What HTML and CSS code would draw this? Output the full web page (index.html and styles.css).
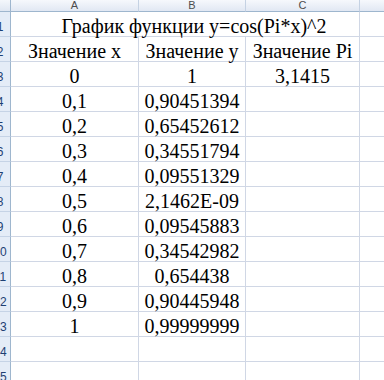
FILE: index.html
```html
<!DOCTYPE html>
<html>
<head>
<meta charset="utf-8">
<link rel="stylesheet" href="styles.css">
</head>
<body>
<div class="sheet">
  <div class="corner"></div><div class="ch">A</div><div class="ch">B</div><div class="ch">C</div><div class="ch last"></div>

  <div class="rh">1</div><div class="c title">График функции y=cos(Pi*x)^2</div><div class="c"></div>
  <div class="rh">2</div><div class="c">Значение x</div><div class="c">Значение y</div><div class="c">Значение Pi</div><div class="c"></div>
  <div class="rh">3</div><div class="c">0</div><div class="c">1</div><div class="c">3,1415</div><div class="c"></div>
  <div class="rh">4</div><div class="c">0,1</div><div class="c">0,90451394</div><div class="c"></div><div class="c"></div>
  <div class="rh">5</div><div class="c">0,2</div><div class="c">0,65452612</div><div class="c"></div><div class="c"></div>
  <div class="rh">6</div><div class="c">0,3</div><div class="c">0,34551794</div><div class="c"></div><div class="c"></div>
  <div class="rh">7</div><div class="c">0,4</div><div class="c">0,09551329</div><div class="c"></div><div class="c"></div>
  <div class="rh">8</div><div class="c">0,5</div><div class="c">2,1462E-09</div><div class="c"></div><div class="c"></div>
  <div class="rh">9</div><div class="c">0,6</div><div class="c">0,09545883</div><div class="c"></div><div class="c"></div>
  <div class="rh">10</div><div class="c">0,7</div><div class="c">0,34542982</div><div class="c"></div><div class="c"></div>
  <div class="rh">11</div><div class="c">0,8</div><div class="c">0,654438</div><div class="c"></div><div class="c"></div>
  <div class="rh">12</div><div class="c">0,9</div><div class="c">0,90445948</div><div class="c"></div><div class="c"></div>
  <div class="rh">13</div><div class="c">1</div><div class="c">0,99999999</div><div class="c"></div><div class="c"></div>
  <div class="rh">14</div><div class="c"></div><div class="c"></div><div class="c"></div><div class="c"></div>
  <div class="rh">15</div><div class="c"></div><div class="c"></div><div class="c"></div><div class="c"></div>
</div>
</body>
</html>
```
FILE: styles.css
```css
html, body {
  margin: 0;
  padding: 0;
  background: #ffffff;
  overflow: hidden;
  width: 384px;
  height: 380px;
}

.sheet {
  display: grid;
  grid-template-columns: 21px 128px 107px 114px 40px;
  grid-template-rows: 12px repeat(15, 25px);
  margin-left: -10px;
  width: 410px;
}

.sheet > div {
  box-sizing: border-box;
}

.corner {
  background: linear-gradient(#f4f7fb, #dfe7f2);
  border-right: 1px solid #9eb6ce;
  border-bottom: 1px solid #9eb6ce;
}

.ch {
  background: linear-gradient(#f6f8fc, #e1e8f3);
  border-right: 1px solid #c5d2e3;
  border-bottom: 1px solid #9eb6ce;
  font-family: "Liberation Sans", Arial, sans-serif;
  font-size: 11px;
  line-height: 11px;
  color: #4d4d4d;
  text-align: center;
}

.rh {
  background: #e4ecf7;
  border-right: 1px solid #9eb6ce;
  border-bottom: 1px solid #c5d3e6;
  font-family: "Liberation Sans", Arial, sans-serif;
  font-size: 12px;
  color: #1e3f73;
  display: flex;
  align-items: flex-end;
  justify-content: center;
  padding-bottom: 3px;
  line-height: 12px;
}

.c {
  border-right: 1px solid #d0d7e5;
  border-bottom: 1px solid #d0d7e5;
  font-family: "Liberation Serif", "Times New Roman", serif;
  font-size: 20px;
  line-height: 20px;
  color: #000000;
  display: flex;
  align-items: flex-end;
  justify-content: center;
  white-space: nowrap;
}

.title {
  grid-column: span 3;
  padding-left: 18px;
}
```
